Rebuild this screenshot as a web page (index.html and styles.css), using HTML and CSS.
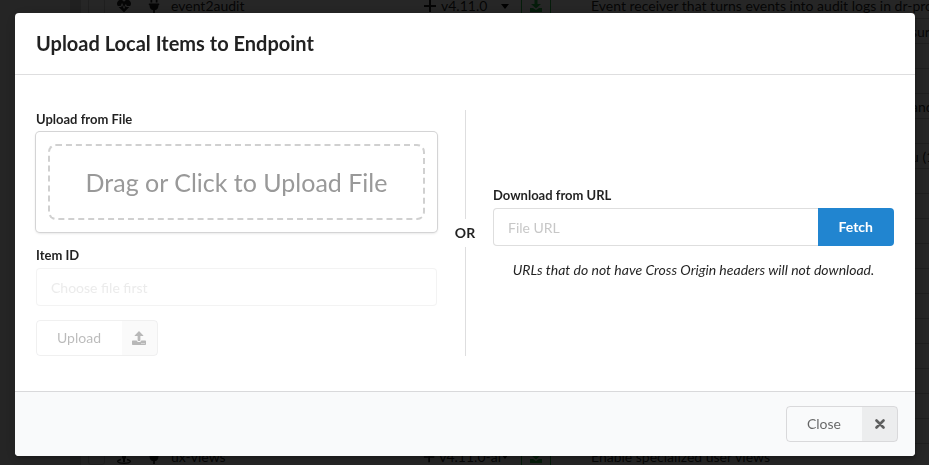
FILE: index.html
```html
<!DOCTYPE html>
<html lang="en">
<head>
<meta charset="utf-8">
<title>Upload Local Items to Endpoint</title>
<link rel="stylesheet" href="styles.css">
</head>
<body>
<svg class="sprite" aria-hidden="true">
  <symbol id="heartbeat" viewBox="0 0 512 512"><path d="M320.200 243.800l-49.700 99.400c-6 12.100-23.400 11.700-28.900-.6l-56.900-126.300-30 71.700H60.600l182.500 186.500c7.100 7.300 18.600 7.300 25.700 0L451.400 288H342.300l-22.100-44.200zM473.700 73.900l-2.400-2.500c-51.500-52.600-135.800-52.600-187.400 0L256 100l-27.900-28.500c-51.500-52.700-135.900-52.700-187.400 0l-2.400 2.400C-10.400 123.700-12.500 203 31 256h102.400l35.900-86.200c5.400-12.900 23.600-13.200 29.400-.4l58.200 129.300 49-97.900c5.900-11.800 22.700-11.800 28.600 0l27.600 55.200H481c43.500-53 41.400-132.300-7.300-182.100z"/></symbol>
  <symbol id="street" viewBox="0 0 14 14"><circle cx="7" cy="2" r="2"/><path d="M5 4.500h4v4H8V12H6V8.500H5z"/><path d="M4 9.500C-1 10.500-.5 13.200 7 13.200s8-2.700 3-3.700" fill="none" stroke="currentColor" stroke-width="1.400"/></symbol>
  <symbol id="plug" viewBox="0 0 384 512"><path d="M320 32a32 32 0 0 0-64 0v96h64zm48 128H16a16 16 0 0 0-16 16v32a16 16 0 0 0 16 16h16v32a160 160 0 0 0 128 156.800V512h64v-99.200A160 160 0 0 0 352 256v-32h16a16 16 0 0 0 16-16v-32a16 16 0 0 0-16-16zM128 32a32 32 0 0 0-64 0v96h64z"/></symbol>
  <symbol id="plus" viewBox="0 0 14 14"><path d="M6 1h2v5h5v2H8v5H6V8H1V6h5z"/></symbol>
  <symbol id="download" viewBox="0 0 14 14"><path d="M5.500 1h3v4H12L7 9.500 2 5h3.500zM1 9h3l3 2 3-2h3v4H1z"/></symbol>
  <symbol id="upload" viewBox="0 0 14 14"><path d="M7 0l4.300 4.400a.4.400 0 0 1-.3.700H8.400v4.200a.7.700 0 0 1-.7.700H6.300a.7.700 0 0 1-.7-.7V5.100H3a.4.400 0 0 1-.3-.7zM.7 9.600h4a1.700 1.700 0 0 0 1.600 1.500h1.400a1.700 1.700 0 0 0 1.600-1.500h4c.4 0 .7.300.7.700v3c0 .4-.3.700-.7.700H.7a.7.700 0 0 1-.7-.7v-3c0-.4.300-.7.700-.7zm9.300 2.300a.6.600 0 1 0 0 1.200.6.600 0 0 0 0-1.200zm2 0a.6.600 0 1 0 0 1.200.6.600 0 0 0 0-1.200z"/></symbol>
  <symbol id="close" viewBox="0 0 10 10"><path d="M1.500 1.500l7 7m0-7l-7 7" fill="none" stroke="currentColor" stroke-width="2.600" stroke-linecap="round"/></symbol>
</svg>

<main class="page">
  <div class="side"></div>
  <table class="catalog">
    <tbody id="rows">
      <tr>
        <td class="pick"><input type="checkbox" aria-label="event2audit"></td>
        <td class="mark"><svg class="icon"><use href="#heartbeat"/></svg></td>
        <td class="plugin"><svg class="icon"><use href="#plug"/></svg></td>
        <td class="name">event2audit</td>
        <td class="version"><span class="ver"><svg class="icon"><use href="#plus"/></svg><span class="num">v4.11.0</span><i class="caret"></i></span></td>
        <td class="get"><button type="button" class="fetch-icon" aria-label="Download"><svg class="icon"><use href="#download"/></svg></button></td>
        <td>Event receiver that turns events into audit logs in dr-provision</td>
      </tr>
      <tr><td colspan="6"></td><td class="tail">sure</td></tr>
      <tr><td colspan="7"></td></tr>
      <tr><td colspan="7"></td></tr>
      <tr><td colspan="6"></td><td class="tail">and</td></tr>
      <tr><td colspan="7"></td></tr>
      <tr><td colspan="6"></td><td class="tail">u (1)</td></tr>
      <tr><td colspan="7"></td></tr>
      <tr><td colspan="7"></td></tr>
      <tr><td colspan="7"></td></tr>
      <tr><td colspan="7"></td></tr>
      <tr><td colspan="7"></td></tr>
      <tr><td colspan="7"></td></tr>
      <tr><td colspan="7"></td></tr>
      <tr><td colspan="7"></td></tr>
      <tr><td colspan="7"></td></tr>
      <tr><td colspan="7"></td></tr>
      <tr><td colspan="7"></td></tr>
      <tr>
        <td class="pick"><input type="checkbox" aria-label="ux-views"></td>
        <td class="mark"><svg class="icon"><use href="#street"/></svg></td>
        <td class="plugin"><svg class="icon"><use href="#plug"/></svg></td>
        <td class="name">ux-views</td>
        <td class="version"><span class="ver"><svg class="icon"><use href="#plus"/></svg><span class="num">v4.11.0-al</span><i class="caret"></i></span></td>
        <td class="get"><button type="button" class="fetch-icon" aria-label="Download"><svg class="icon"><use href="#download"/></svg></button></td>
        <td>Enable specialized user views</td>
      </tr>
    </tbody>
  </table>
</main>

<div class="dimmer">
  <section class="modal" role="dialog" aria-labelledby="title">
    <h1 class="title" id="title">Upload Local Items to Endpoint</h1>
    <div class="content">
      <form class="form">
        <div class="field">
          <label for="file">Upload from File</label>
          <button type="button" class="drop" id="file"><span class="drop-area">Drag or Click to Upload File</span></button>
        </div>
        <div class="field">
          <label for="item">Item ID</label>
          <input class="input faded" id="item" type="text" placeholder="Choose file first" disabled>
        </div>
        <button type="button" class="button faded-button" disabled><span class="text">Upload</span><span class="badge"><svg class="icon"><use href="#upload"/></svg></span></button>
      </form>
      <div class="divider">OR</div>
      <form class="form">
        <div class="field">
          <label for="url">Download from URL</label>
          <div class="action">
            <input class="input" id="url" type="text" placeholder="File URL">
            <button type="button" class="primary">Fetch</button>
          </div>
        </div>
        <p class="hint">URLs that do not have Cross Origin headers will not download.</p>
      </form>
    </div>
    <footer class="actions">
      <button type="button" class="button"><span class="text">Close</span><span class="badge"><svg class="icon small"><use href="#close"/></svg></span></button>
    </footer>
  </section>
</div>
</body>
</html>
```
FILE: styles.css
```css
* { box-sizing: border-box; }

body {
  margin: 0;
  height: 100vh;
  overflow: hidden;
  background: #fff;
  color: rgba(0, 0, 0, .87);
  font: 14px/20px Lato, "Liberation Sans", sans-serif;
}

button, input { font: inherit; }
.sprite { display: none; }
.icon { display: block; width: 14px; height: 14px; fill: currentColor; }

/* Catalog behind the dialog */
.page { display: flex; height: 100vh; overflow: hidden; }
.side { flex: 0 0 81px; background: #f9f9f9; border-right: 11px solid #d4d4d5; }
.catalog {
  flex: 1;
  margin-top: -7px;
  border-collapse: collapse;
  table-layout: fixed;
  width: 100%;
}
.catalog tr { height: 25px; }
.catalog td { padding: 2px 0 0; border-bottom: 1px solid #ccc; white-space: nowrap; height: 25px; }
.catalog .pick { width: 36px; padding-left: 7px; }
.pick input { display: block; appearance: none; width: 17px; height: 17px; margin: 0; border: 1px solid #ccc; border-radius: 3px; }
.catalog .mark { width: 30px; }
.catalog .plugin { width: 24px; }
.catalog .name { width: 252px; }
.catalog .version { width: 98px; }
.catalog .get { width: 70px; }
.catalog .tail { padding-left: 320px; }
.ver { display: flex; align-items: center; }
.num { flex: 1; padding-left: 4px; }
.caret { margin-right: 12px; border: 4px solid transparent; border-top: 5px solid #000; border-bottom: 0; }
.fetch-icon { display: flex; justify-content: center; align-items: center; width: 30px; height: 22px; padding: 0; border: 1px solid #21ba45; border-radius: 3px; background: none; color: #21ba45; }

.dimmer {
  position: fixed;
  inset: 0;
  display: flex;
  align-items: center;
  justify-content: center;
  padding: 4px 14px 0 15px;
  background: rgba(0, 0, 0, .85);
}

.modal {
  width: 100%;
  max-width: 900px;
  overflow: hidden;
  border-radius: 4px;
  background: #fff;
  box-shadow: 1px 3px 3px rgba(0, 0, 0, .2), 1px 3px 15px 2px rgba(0, 0, 0, .2);
}

.title {
  margin: 0;
  padding: 18px 21px;
  border-bottom: 1px solid rgba(34, 36, 38, .15);
  font-size: 20px;
  line-height: 25px;
  font-weight: 700;
}

.content {
  display: grid;
  grid-template-columns: 1fr 56px 1fr;
  align-items: center;
  padding: 35px 21px;
}

.form, .field { display: flex; flex-direction: column; }
.form { gap: 14px; min-width: 0; }
.field { gap: 4px; }
.field label { font-size: 13px; line-height: 18px; font-weight: 700; }

.drop {
  padding: 12px;
  border: 0;
  border-radius: 4px;
  background: #fff;
  box-shadow: 0 0 0 1px #d4d4d5, 0 1px 3px 0 #d4d4d5;
  color: #999;
}
.drop-area {
  display: block;
  padding: 20px 0;
  border: 2px dashed #d0d0d0;
  border-radius: 8px;
  font-size: 25px;
  line-height: 32px;
}

.input {
  width: 100%;
  min-width: 0;
  height: 38px;
  padding: 0 14px;
  border: 1px solid rgba(34, 36, 38, .15);
  border-radius: 4px;
  background: #fff;
  color: inherit;
}
.input::placeholder { color: rgba(191, 191, 191, .87); }
.faded { opacity: .35; }
.action { display: flex; }
.action .input { border-right: 0; border-radius: 4px 0 0 4px; }

.primary {
  padding: 0 21px;
  border: 0;
  border-radius: 0 4px 4px 0;
  background: #2185d0;
  color: #fff;
  font-weight: 700;
}

.divider {
  display: flex;
  flex-direction: column;
  align-items: center;
  align-self: stretch;
  gap: 4px;
  font-weight: 700;
}
.divider::before, .divider::after {
  content: "";
  flex: 1;
  border-left: 1px solid rgba(34, 36, 38, .15);
}

.hint { margin: 0; text-align: center; font-style: italic; }

.button {
  display: flex;
  align-self: flex-start;
  height: 36px;
  padding: 0;
  overflow: hidden;
  border: 1px solid rgba(34, 36, 38, .15);
  border-radius: 4px;
  background: none;
  color: rgba(0, 0, 0, .6);
}
.button .text { padding: 7px 21px 7px 20px; }
.button .badge { display: flex; align-items: center; justify-content: center; width: 35px; height: 34px; background: rgba(0, 0, 0, .05); }
.small { width: 10px; height: 10px; }
.faded-button { opacity: .45; }

.actions {
  display: flex;
  justify-content: flex-end;
  padding: 14px 17px;
  border-top: 1px solid rgba(34, 36, 38, .15);
  background: #f9fafb;
}
```
